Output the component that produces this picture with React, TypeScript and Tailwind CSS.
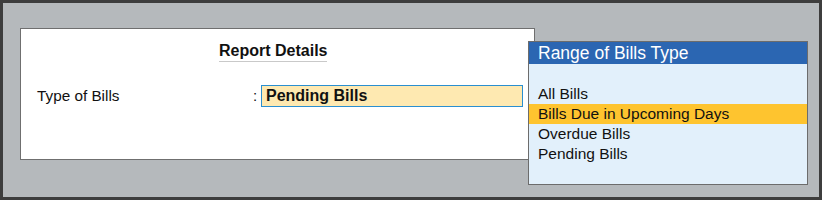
const billTypes = ['All Bills', 'Bills Due in Upcoming Days', 'Overdue Bills', 'Pending Bills']

export default function App() {
  const selected = 'Bills Due in Upcoming Days'

  return (
    <div
      className="relative h-[200px] w-[822px] border-[3px] border-[#3d3d3d] bg-[#b5b9bc] text-[#111]"
      style={{ fontFamily: '"Liberation Sans", Arial, sans-serif' }}
    >
      <div className="ml-[17px] mt-[25px] h-[132px] w-[515px] border border-[#6f6f6f] bg-white">
        <div className="pl-[198px] pt-[10px]">
          <span className="inline-block border-b border-[#c9c9c9] text-[16px] font-bold leading-[20px]">
            Report Details
          </span>
        </div>
        <div className="mt-[22px] flex items-center">
          <span className="w-[232px] pl-[16px] text-[15.3px] leading-[22px]">Type of Bills</span>
          <span className="w-[8px] text-[15px] leading-[22px]">:</span>
          <div className="flex h-[22px] w-[262px] items-center border border-[#2a8fd0] bg-[#fee9b1] pl-[4px] text-[16px] font-bold leading-[20px]">
            Pending Bills
          </div>
        </div>
      </div>

      <div className="absolute left-[525px] top-[38px] flex h-[144px] w-[280px] flex-col border border-[#6c6c6c] bg-[#e2f0fb]">
        <div className="h-[22px] bg-[#2b66b2] pl-[9px] text-[17.5px] leading-[22px] text-white">
          Range of Bills Type
        </div>
        <ul className="pt-[20px]">
          {billTypes.map((item) => (
            <li
              key={item}
              className={`h-[20px] pl-[9px] text-[15.5px] leading-[20px] ${item === selected ? 'bg-[#fec42f]' : ''}`}
            >
              {item}
            </li>
          ))}
        </ul>
      </div>
    </div>
  )
}
